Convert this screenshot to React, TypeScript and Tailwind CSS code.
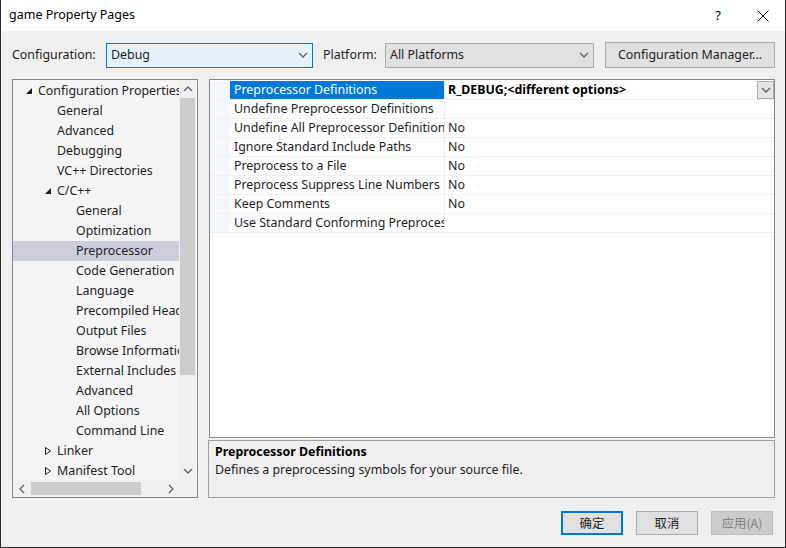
const font = { fontFamily: '"Noto Sans", "Noto Sans CJK SC", sans-serif' };

const Chevron = ({ dir = "down", color = "#606060" }: { dir?: "down" | "up" | "left" | "right"; color?: string }) => {
  const pts = {
    down: "1,3 5,7 9,3",
    up: "1,7 5,3 9,7",
    left: "7,1 3,5 7,9",
    right: "3,1 7,5 3,9",
  }[dir];
  return (
    <svg width="10" height="10" viewBox="0 0 10 10">
      <polyline points={pts} fill="none" stroke={color} strokeWidth="1.3" />
    </svg>
  );
};

const Expanded = () => (
  <svg width="8" height="8" viewBox="0 0 8 8">
    <polygon points="7,1 7,7 1,7" fill="#1e1e1e" />
  </svg>
);

const Collapsed = () => (
  <svg width="8" height="10" viewBox="0 0 8 10">
    <polygon points="1.5,1.5 6.5,5 1.5,8.5" fill="none" stroke="#1e1e1e" strokeWidth="1" />
  </svg>
);

type Node = { label: string; level: number; toggle?: "open" | "closed"; selected?: boolean };

const tree: Node[] = [
  { label: "Configuration Properties", level: 0, toggle: "open" },
  { label: "General", level: 1 },
  { label: "Advanced", level: 1 },
  { label: "Debugging", level: 1 },
  { label: "VC++ Directories", level: 1 },
  { label: "C/C++", level: 1, toggle: "open" },
  { label: "General", level: 2 },
  { label: "Optimization", level: 2 },
  { label: "Preprocessor", level: 2, selected: true },
  { label: "Code Generation", level: 2 },
  { label: "Language", level: 2 },
  { label: "Precompiled Headers", level: 2 },
  { label: "Output Files", level: 2 },
  { label: "Browse Information", level: 2 },
  { label: "External Includes", level: 2 },
  { label: "Advanced", level: 2 },
  { label: "All Options", level: 2 },
  { label: "Command Line", level: 2 },
  { label: "Linker", level: 1, toggle: "closed" },
  { label: "Manifest Tool", level: 1, toggle: "closed" },
];

const props = [
  ["Preprocessor Definitions", "R_DEBUG;<different options>"],
  ["Undefine Preprocessor Definitions", ""],
  ["Undefine All Preprocessor Definitions", "No"],
  ["Ignore Standard Include Paths", "No"],
  ["Preprocess to a File", "No"],
  ["Preprocess Suppress Line Numbers", "No"],
  ["Keep Comments", "No"],
  ["Use Standard Conforming Preprocessor", ""],
];

const indent = ["pl-[12px]", "pl-[31px]", "pl-[50px]"];

export default function App() {
  return (
    <div
      className="w-[786px] h-[548px] bg-[#f0f0f0] border-x border-b border-[#2b2b2b] flex flex-col text-[12.4px] text-[#1e1e1e] overflow-hidden"
      style={font}
    >
      {/* title bar */}
      <div className="h-[31px] bg-white flex items-center shrink-0">
        <span className="ml-[8px] text-[12.5px] text-black">game Property Pages</span>
        <span className="ml-auto mr-[36px] text-[13px] text-black">?</span>
        <svg width="12" height="12" viewBox="0 0 12 12" className="mr-[16px]">
          <path d="M0.5 0.5 L11.5 11.5 M11.5 0.5 L0.5 11.5" stroke="#111" strokeWidth="1" />
        </svg>
      </div>

      {/* configuration row */}
      <div className="mt-[11px] h-[26px] flex items-center shrink-0">
        <span className="ml-[11px] w-[94px]">Configuration:</span>
        <div className="w-[207px] h-[25px] border border-[#0078d7] bg-[#e5f1fb] flex items-center pl-[4px] pr-[4px]">
          <span>Debug</span>
          <span className="ml-auto"><Chevron /></span>
        </div>
        <span className="ml-[10px] w-[62px]">Platform:</span>
        <div className="w-[209px] h-[25px] border border-[#adadad] bg-[#e1e1e1] flex items-center pl-[4px] pr-[4px]">
          <span>All Platforms</span>
          <span className="ml-auto"><Chevron /></span>
        </div>
        <div className="ml-[11px] w-[170px] h-[26px] border border-[#adadad] bg-[#e1e1e1] flex items-center justify-center">
          Configuration Manager...
        </div>
      </div>

      {/* main */}
      <div className="mt-[11px] flex shrink-0">
        {/* tree */}
        <div className="ml-[11px] w-[186px] h-[419px] border border-[#828790] bg-[#f5f5f5] flex flex-col">
          <div className="flex h-[400px]">
            <div className="w-[166px] pt-[1px] overflow-hidden">
              {tree.map((n, i) => (
                <div
                  key={i}
                  className={`h-[20px] flex items-center whitespace-nowrap ${indent[n.level]} ${n.selected ? "bg-[#cccedb]" : ""}`}
                >
                  <span className="w-[13px] flex items-center shrink-0">
                    {n.toggle === "open" && <Expanded />}
                    {n.toggle === "closed" && <Collapsed />}
                  </span>
                  <span>{n.label}</span>
                </div>
              ))}
            </div>
            <div className="w-[17px] bg-[#f0f0f0] flex flex-col items-center">
              <div className="h-[18px] flex items-center justify-center"><Chevron dir="up" /></div>
              <div className="w-[15px] h-[277px] bg-[#cdcdcd]" />
              <div className="mt-auto h-[18px] flex items-center justify-center"><Chevron dir="down" /></div>
            </div>
          </div>
          <div className="flex h-[17px] bg-[#f0f0f0]">
            <div className="w-[166px] flex items-center">
              <div className="w-[17px] flex justify-center"><Chevron dir="left" /></div>
              <div className="ml-[1px] w-[110px] h-[13px] bg-[#cdcdcd]" />
              <div className="ml-auto w-[17px] flex justify-center"><Chevron dir="right" /></div>
            </div>
          </div>
        </div>

        {/* right column */}
        <div className="ml-[10px] w-[567px] flex flex-col">
          <div className="ml-[1px] h-[359px] border border-[#828790] bg-white pt-[1px]">
            {props.map(([name, value], i) => (
              <div key={i} className="flex h-[19px] border-b border-[#f0f0f0]">
                <div className="w-[20px] bg-[#f5f7fc]" />
                <div
                  className={`w-[215px] pl-[4px] pt-[1px] flex items-center whitespace-nowrap overflow-hidden border-r border-[#f0f0f0] ${i === 0 ? "bg-[#0078d7] text-white" : ""}`}
                >
                  {name}
                </div>
                <div className="flex-1 pl-[3px] flex items-center">
                  <span className={`pt-[1px] ${i === 0 ? "font-bold text-black" : ""}`}>{value}</span>
                  {i === 0 && (
                    <div className="ml-auto w-[17px] h-[18px] border border-[#acacac] bg-[#e5e5e5] flex items-center justify-center">
                      <Chevron />
                    </div>
                  )}
                </div>
              </div>
            ))}
          </div>
          <div className="mt-[2px] h-[58px] border border-[#a0a0a0] bg-[#f0f0f0] px-[6px] pt-[2px]">
            <div className="font-bold text-black leading-[18px]">Preprocessor Definitions</div>
            <div className="leading-[18px]">Defines a preprocessing symbols for your source file.</div>
          </div>
        </div>
      </div>

      {/* buttons */}
      <div className="mt-[13px] flex justify-end gap-[13px] pr-[12px] shrink-0" style={{ fontFamily: '"Noto Sans CJK SC", sans-serif' }}>
        <div className="w-[62px] h-[24px] border-2 border-[#0078d7] bg-[#e1e1e1] flex items-center justify-center">确定</div>
        <div className="w-[62px] h-[24px] border border-[#adadad] bg-[#e1e1e1] flex items-center justify-center">取消</div>
        <div className="w-[62px] h-[24px] border border-[#bfbfbf] bg-[#cccccc] text-[#838383] flex items-center justify-center">应用(A)</div>
      </div>
    </div>
  );
}
